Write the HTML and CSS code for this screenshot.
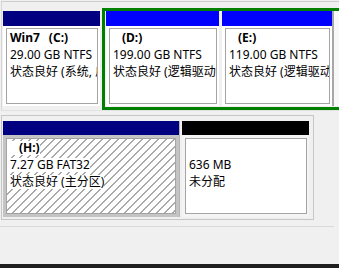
FILE: index.html
```html
<!DOCTYPE html>
<html>
<head>
<meta charset="utf-8">
<link rel="stylesheet" href="styles.css">
</head>
<body>
<div class="screen">
  <div class="disk disk1">
    <div class="vol vol-c">
      <div class="bar navy"></div>
      <div class="body"><div class="inner">
        <div class="line"><span class="t label"><span class="name">Win7</span><span class="letter">(C:)</span></span></div>
        <div class="line"><span class="t">29.00 GB NTFS</span></div>
        <div class="line"><span class="t">状态良好 (系统, 启动, 页面文件, 活动, 故障转储, 主分区)</span></div>
      </div></div>
    </div>
    <div class="extended">
      <div class="vol vol-d">
        <div class="bar blue"></div>
        <div class="body"><div class="inner">
          <div class="line"><span class="t label"><span class="letter">(D:)</span></span></div>
          <div class="line"><span class="t">199.00 GB NTFS</span></div>
          <div class="line"><span class="t">状态良好 (逻辑驱动器)</span></div>
        </div></div>
      </div>
      <div class="vol vol-e">
        <div class="bar blue"></div>
        <div class="body"><div class="inner">
          <div class="line"><span class="t label"><span class="letter">(E:)</span></span></div>
          <div class="line"><span class="t">119.00 GB NTFS</span></div>
          <div class="line"><span class="t">状态良好 (逻辑驱动器)</span></div>
        </div></div>
      </div>
      <div class="vol-stub"></div>
    </div>
  </div>

  <div class="disk disk2">
    <div class="vol vol-h selected">
      <div class="bar navy short"></div>
      <div class="body"><div class="inner hatched">
        <div class="line"><span class="t label"><span class="letter">(H:)</span></span></div>
        <div class="line"><span class="t">7.27 GB FAT32</span></div>
        <div class="line"><span class="t">状态良好 (主分区)</span></div>
      </div></div>
    </div>
    <div class="unalloc-wrap">
      <div class="vol vol-u">
        <div class="bar black short"></div>
        <div class="body"><div class="inner">
          <div class="line"></div>
          <div class="line"><span class="t">636 MB</span></div>
          <div class="line"><span class="t">未分配</span></div>
        </div></div>
      </div>
    </div>
  </div>

  <div class="rule"></div>
  <div class="spacer"></div>
  <div class="footer"></div>
</div>
</body>
</html>
```
FILE: styles.css
```css
html, body {
  margin: 0;
  padding: 0;
  background: #f0f0f0;
}
body {
  width: 339px;
  height: 268px;
  overflow: hidden;
}
.screen {
  display: flex;
  flex-direction: column;
  width: 339px;
  height: 268px;
  overflow: hidden;
  font-family: "Noto Sans", "Noto Sans CJK SC", sans-serif;
  font-size: 12px;
  color: #000;
}

/* disk rows */
.disk {
  display: flex;
  align-items: flex-start;
  flex-shrink: 0;
}
.disk1 {
  margin: 1px 0 0 1px;
  border-top: 1px solid #cdcdcd;
  border-left: 1px solid #d6d6d6;
  border-bottom: 1px solid #e2e2e2;
  padding: 6px 0 0 1px;
  overflow: hidden;
}
.disk2 {
  align-self: flex-start;
  margin: 4px 0 0 1px;
  border: 1px solid #c6c6c6;
  padding: 5px 1px 2px 1px;
}

/* volumes */
.vol {
  display: flex;
  flex-direction: column;
  flex: 0 0 auto;
}
.bar {
  height: 15px;
}
.bar.short {
  height: 14px;
}
.navy { background: #000080; }
.blue { background: #0000ff; }
.black { background: #000; }

.body {
  height: 80px;
  box-sizing: border-box;
  padding: 2px 2px 2px 3px;
  background: #fff;
}
.inner {
  height: 100%;
  box-sizing: border-box;
  border: 1px solid #a4a4a4;
  background: #fff;
  overflow: hidden;
}
.line {
  height: 17px;
  white-space: nowrap;
}
.t {
  display: inline-block;
  height: 14px;
  line-height: 14px;
  margin-top: 2px;
  padding-left: 3px;
  vertical-align: top;
  white-space: nowrap;
}
.label {
  font-weight: bold;
}
.letter {
  padding-left: 9px;
}

.vol-c {
  width: 97px;
  margin-top: 3px;
}

/* extended partition frame (continues past the right edge) */
.extended {
  display: flex;
  flex: 0 0 300px;
  width: 300px;
  min-width: 300px;
  margin-left: 2px;
  border: 3px solid #008000;
  border-right: 0;
  padding: 0 0 1px 1px;
}
.vol-d {
  width: 113px;
  margin-right: 3px;
}
.vol-e {
  width: 110px;
}
.vol-stub {
  flex: 0 0 60px;
  border-left: 2px solid #a8a8a8;
  background: #f8f8f8;
}

/* second disk */
.vol-h {
  width: 176px;
}
.vol-h .body {
  height: 82px;
  padding: 3px;
  background: #c4c4c4;
}
.hatched {
  background: repeating-linear-gradient(135deg, #ffffff 0, #ffffff 4.8px, #a9a9a9 4.8px, #a9a9a9 5.66px);
}
.hatched .t {
  background: #fff;
}
.unalloc-wrap {
  border-left: 1px solid #b4b4b4;
  padding: 0 3px 0 2px;
}
.vol-u {
  width: 127px;
}
.vol-u .body {
  height: 82px;
  padding: 3px 2px 3px 3px;
  background: #f4f4f4;
}

.rule {
  flex-shrink: 0;
  width: 334px;
  height: 1px;
  margin-top: 6px;
  background: #d9d9d9;
}
.spacer {
  flex: 1;
}
.footer {
  flex-shrink: 0;
  height: 4px;
  background: #1f1f1f;
}
```
